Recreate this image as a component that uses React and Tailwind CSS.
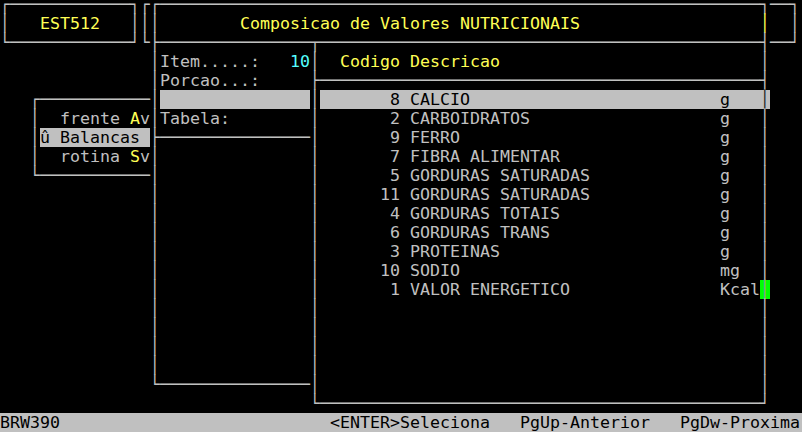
const COLS = 80;
const ROWS = 23;

const STYLE = {
  g: "text-[#c0c0c0]",
  y: "text-[#ffff55]",
  c: "text-[#55ffff]",
  hl: "bg-[#c0c0c0] text-[#000000]",
  hlb: "bg-[#c0c0c0] text-[#2a2a2a]",
  cur: "bg-[#00ff00] text-[#9a9a9a]",
};

function buildScreen() {
  const screen = [];
  for (let r = 0; r < ROWS; r++) {
    const row = [];
    for (let c = 0; c < COLS; c++) row.push({ ch: " ", s: "g" });
    screen.push(row);
  }
  const put = (r, c, text, s = "g") => {
    [...text].forEach((ch, i) => {
      if (c + i < COLS) screen[r][c + i] = { ch, s };
    });
  };
  const h = (n) => "─".repeat(n);

  // top windows
  put(0, 0, "┌" + h(12) + "┐");
  put(0, 14, "┌┌" + h(60) + "┐" + h(2) + "┐");
  put(1, 0, "│");
  put(1, 4, "EST512", "y");
  put(1, 13, "│││");
  put(1, 24, "Composicao de Valores NUTRICIONAIS", "y");
  put(1, 76, "│", "y");
  put(1, 79, "│");
  put(2, 0, "└" + h(12) + "┘");
  put(2, 14, "└├" + h(15) + "┬" + h(44) + "┤" + h(2) + "┘");

  // side borders
  for (let r = 3; r <= 19; r++) {
    put(r, 15, "│");
    put(r, 31, "│");
    put(r, 76, "│");
  }
  put(20, 15, "└" + h(15));
  put(20, 31, "│");
  put(20, 76, "│");
  put(21, 31, "└" + h(44) + "┘");

  // item panel
  put(3, 16, "Item.....:");
  put(3, 29, "10", "c");
  put(4, 16, "Porcao...:");
  put(5, 16, " ".repeat(15), "hl");
  put(6, 16, "Tabela:");
  put(7, 15, "├" + h(15));

  // list header
  put(3, 34, "Codigo Descricao", "y");
  put(4, 31, "├" + h(44) + "┤");

  // menu behind
  put(5, 3, "┌" + h(11));
  put(6, 3, "│");
  put(6, 6, "frente ");
  put(6, 13, "A", "y");
  put(6, 14, "v");
  put(7, 3, "│");
  put(7, 4, "û Balancas ", "hl");
  put(8, 3, "│");
  put(8, 6, "rotina ");
  put(8, 13, "S", "y");
  put(8, 14, "v");
  put(9, 3, "└" + h(11));

  const items = [
    ["8", "CALCIO", "g"],
    ["2", "CARBOIDRATOS", "g"],
    ["9", "FERRO", "g"],
    ["7", "FIBRA ALIMENTAR", "g"],
    ["5", "GORDURAS SATURADAS", "g"],
    ["11", "GORDURAS SATURADAS", "g"],
    ["4", "GORDURAS TOTAIS", "g"],
    ["6", "GORDURAS TRANS", "g"],
    ["3", "PROTEINAS", "g"],
    ["10", "SODIO", "mg"],
    ["1", "VALOR ENERGETICO", "Kcal"],
  ];
  items.forEach(([code, desc, unit], i) => {
    const r = 5 + i;
    const s = i === 0 ? "hl" : "g";
    if (i === 0) put(r, 32, " ".repeat(44), "hl");
    put(r, 40 - code.length, code, s);
    put(r, 41, desc, s);
    put(r, 72, unit, s);
  });
  put(5, 76, "│", "hlb");
  put(15, 76, "│", "cur");

  // status bar
  put(22, 0, " ".repeat(COLS), "hl");
  put(22, 0, "BRW390", "hl");
  put(22, 33, "<ENTER>Seleciona", "hl");
  put(22, 52, "PgUp-Anterior", "hl");
  put(22, 68, "PgDw-Proxima", "hl");

  return screen;
}

function Row({ cells, last }) {
  const spans = [];
  cells.forEach((cell) => {
    const prev = spans[spans.length - 1];
    if (prev && prev.s === cell.s) prev.text += cell.ch;
    else spans.push({ s: cell.s, text: cell.ch });
  });
  return (
    <div className={last ? "h-[19px] w-full bg-[#c0c0c0]" : "h-[19px] w-full"}>
      {spans.map((sp, i) => (
        <span key={i} className={STYLE[sp.s]}>
          {sp.text}
        </span>
      ))}
    </div>
  );
}

export default function App() {
  const screen = buildScreen();
  return (
    <div className="h-[432px] w-[802px] overflow-hidden bg-black">
      <div className="-mt-[5px] whitespace-pre font-['DejaVu_Sans_Mono',monospace] text-[16.61px] leading-[19px]">
        {screen.map((cells, r) => (
          <Row key={r} cells={cells} last={r === ROWS - 1} />
        ))}
      </div>
    </div>
  );
}
